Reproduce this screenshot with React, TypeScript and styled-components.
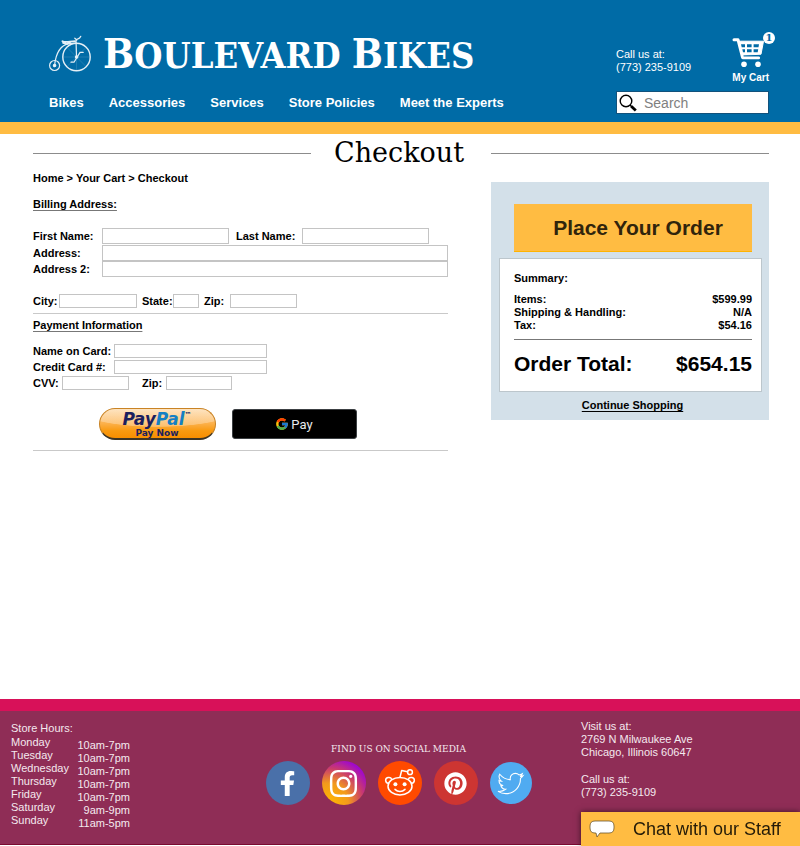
import React from "react";
import styled, { createGlobalStyle } from "styled-components";
import { FaFacebookF, FaInstagram, FaPinterest, FaTwitter } from "react-icons/fa";
import { FcGoogle } from "react-icons/fc";

const slab = `"DejaVu Serif Condensed", "DejaVu Serif", serif`;

const GlobalStyle = createGlobalStyle`
  *, *::before, *::after { box-sizing: border-box; }
  body {
    margin: 0;
    background: #fff;
    color: #000;
    font-family: "Liberation Sans", Arial, Helvetica, sans-serif;
    font-size: 11px;
    line-height: 13px;
  }
  h1, h2, h3, p, dl, dd, fieldset { margin: 0; padding: 0; border: 0; }
  a { color: inherit; text-decoration: none; }
  button, input { font: inherit; }
  svg { display: block; flex: none; }
`;

const Page = styled.div`
  display: flex;
  flex-direction: column;
  min-height: 100vh;
`;

/* Header */
const Header = styled.header`
  display: flex;
  justify-content: space-between;
  padding: 32px 31px 8px 49px;
  background: #006ba6;
  border-bottom: 12px solid #ffbc42;
  color: #fff;
`;
const Identity = styled.div`
  display: flex;
  flex-direction: column;
`;
const Brand = styled.a`
  display: flex;
  align-items: center;
  gap: 12px;
  height: 44px;
`;
const BrandName = styled.h1`
  font: bold 36px/44px ${slab};
  text-transform: uppercase;
  white-space: nowrap;
`;
const Initial = styled.span`
  font-size: 41px;
`;
const Nav = styled.nav`
  display: flex;
  gap: 25px;
  margin-top: 18px;
  font-size: 13px;
  line-height: 17px;
  font-weight: bold;
  white-space: nowrap;
`;
const HeaderTools = styled.div`
  display: flex;
  flex-direction: column;
  width: 153px;
`;
const ContactRow = styled.div`
  display: flex;
  justify-content: space-between;
  height: 52px;
`;
const Phone = styled.p`
  padding-top: 16px;
`;
const CartLink = styled.a`
  position: relative;
  display: flex;
  flex-direction: column;
  align-items: flex-start;
  gap: 3px;
  padding-top: 5px;
  font-size: 10px;
  font-weight: bold;
`;
const Badge = styled.span`
  position: absolute;
  top: 0;
  right: -6px;
  width: 12px;
  height: 12px;
  border-radius: 50%;
  background: #fff;
  color: #006ba6;
  font: bold 10px/12px "DejaVu Serif", serif;
  text-align: center;
`;
const SearchBox = styled.label`
  display: flex;
  align-items: center;
  gap: 7px;
  height: 23px;
  margin-top: 7px;
  padding-left: 3px;
  background: #fff;
  outline: 1px solid #11527c;
  outline-offset: -1px;
`;
const SearchInput = styled.input`
  flex: 1;
  min-width: 0;
  padding: 0;
  border: 0;
  outline: 0;
  background: none;
  font-size: 14px;
  line-height: 16px;
  &::placeholder { color: #808080; opacity: 1; }
`;

/* Body */
const Main = styled.main`
  flex: 1;
  padding: 0 31px 0 33px;
`;
const TitleRow = styled.div`
  display: grid;
  grid-template-columns: 1fr 180px 1fr;
  align-items: center;
  height: 38px;
`;
const TitleRule = styled.span`
  height: 1px;
  background: #8c8c8c;
`;
const Title = styled.h2`
  padding-right: 4px;
  font: 27px/38px "DejaVu Serif", serif;
  text-align: center;
`;
const Columns = styled.div`
  display: grid;
  grid-template-columns: minmax(0, 1fr) 278px;
  gap: 43px;
  align-items: start;
`;
const Form = styled.form`
  font-weight: bold;
`;
const Breadcrumb = styled.nav``;
const SectionTitle = styled.h3<{ $after: number }>`
  width: fit-content;
  margin-bottom: ${(p) => p.$after}px;
  font-size: 11px;
  text-decoration: underline;
  text-decoration-color: #777;
  text-underline-offset: 2px;
`;
const Billing = styled.section`
  padding: 13px 0 5px;
  border-bottom: 1px solid #c9c9c9;
`;
const Payment = styled.section`
  padding: 5px 0 10px;
  border-bottom: 1px solid #c9c9c9;
`;
const Row = styled.div<{ $gap: number; $top?: number }>`
  display: flex;
  align-items: center;
  gap: ${(p) => p.$gap}px;
  margin-top: ${(p) => p.$top ?? 0}px;
`;
const Field = styled.div`
  display: flex;
  align-items: center;
  flex: 0 1 auto;
`;
const WideField = styled(Field)`
  width: 100%;
`;
const Label = styled.label<{ $w: number }>`
  flex: none;
  width: ${(p) => p.$w}px;
  white-space: nowrap;
`;
const Input = styled.input<{ $w?: number; $tall?: boolean }>`
  width: ${(p) => (p.$w ? `${p.$w}px` : "auto")};
  flex: ${(p) => (p.$w ? "0 1 auto" : "1")};
  min-width: 0;
  height: ${(p) => (p.$tall ? 16 : 14)}px;
  padding: 0 3px;
  border: 1px solid #c4c4c4;
  border-radius: 0;
  background: #fff;
`;
const PayButtons = styled.div`
  display: flex;
  align-items: center;
  justify-content: center;
  gap: 16px;
  margin-top: 18px;
  padding-right: 26px;
`;
const PayPalButton = styled.button`
  width: 117px;
  height: 32px;
  padding: 2px 0 0;
  border: 1px solid #c98324;
  border-bottom: 2px solid #3d3424;
  border-radius: 16px;
  background:
    radial-gradient(ellipse 70% 62% at 50% 0%, rgba(255, 255, 255, 0.28) 97%, transparent 100%),
    linear-gradient(#fdd9a8, #fcb04a 50%, #f99a10 75%, #f88e00);
  color: #1b1f5e;
  font-family: "DejaVu Sans", Verdana, sans-serif;
  font-weight: bold;
`;
const PayPalMark = styled.span`
  display: flex;
  justify-content: center;
  font-size: 17px;
  line-height: 17px;
  font-style: italic;
`;
const Pal = styled.span`
  color: #1480c4;
`;
const Trade = styled.sup`
  font-size: 7px;
  line-height: 8px;
  font-style: normal;
`;
const PayNow = styled.span`
  display: block;
  font-size: 9px;
  line-height: 10px;
`;
const GooglePayButton = styled.button`
  display: flex;
  align-items: center;
  justify-content: center;
  gap: 2px;
  width: 125px;
  height: 30px;
  padding: 0;
  border: 1px solid #3c4043;
  border-radius: 3px;
  background: #000;
  color: #e8eaed;
  font-family: Roboto, sans-serif;
  font-size: 13px;
  font-weight: normal;
`;

/* Order summary */
const OrderPanel = styled.aside`
  display: flex;
  flex-direction: column;
  margin-top: 10px;
  padding: 22px 7px 8px 8px;
  background: #d3e0e9;
`;
const PlaceOrder = styled.button`
  height: 48px;
  margin: 0 10px 6px 15px;
  padding: 0 0 0 10px;
  border: 0;
  border-bottom: 1px solid #ffb300;
  background: #ffbc42;
  color: #30240c;
  font-size: 21px;
  font-weight: bold;
`;
const Summary = styled.section`
  padding: 13px 9px 15px 14px;
  border: 1px solid #bcc6cc;
  background: #fff;
  font-weight: bold;
`;
const SummaryTitle = styled.h3`
  margin-bottom: 8px;
  font-size: 11px;
`;
const Lines = styled.dl`
  padding-bottom: 7px;
  border-bottom: 1px solid #777;
`;
const Line = styled.div`
  display: flex;
  justify-content: space-between;
`;
const Total = styled.p`
  display: flex;
  justify-content: space-between;
  margin-top: 12px;
  font-size: 21px;
  line-height: 24px;
`;
const Continue = styled.a`
  align-self: center;
  margin: 7px 0 0 4px;
  font-weight: bold;
  text-decoration: underline;
  text-underline-offset: 2px;
`;

/* Footer */
const Footer = styled.footer`
  display: grid;
  grid-template-columns: 219px 1fr 219px;
  padding-top: 9px;
  min-height: 146px;
  margin-bottom: 1px;
  background: #8f2d56;
  border-top: 12px solid #d81159;
  border-bottom: 1px solid #7a0a30;
  color: #f4e9ee;
`;
const Hours = styled.table`
  width: 119px;
  margin: 2px 0 12px 11px;
  border-collapse: collapse;
  align-self: start;
`;
const Caption = styled.caption`
  padding-bottom: 4px;
  text-align: left;
`;
const Day = styled.th`
  padding: 0;
  font-weight: normal;
  text-align: left;
  vertical-align: top;
  line-height: 7px;
`;
const Time = styled.td`
  padding: 0;
  text-align: right;
`;
const Social = styled.section`
  display: flex;
  flex-direction: column;
  align-items: center;
  padding: 22px 3px 0 0;
`;
const SocialTitle = styled.h3`
  font: 10px/14px ${slab};
  white-space: nowrap;
`;
const SocialList = styled.div`
  display: flex;
  align-items: center;
  gap: 12px;
  margin-top: 5px;
`;
const SocialLink = styled.a<{ $bg: string; $size?: number }>`
  display: flex;
  align-items: center;
  justify-content: center;
  width: ${(p) => p.$size ?? 44}px;
  height: ${(p) => p.$size ?? 44}px;
  border-radius: 50%;
  background: ${(p) => p.$bg};
  color: #fff;
`;
const OutlineBird = styled(FaTwitter)`
  overflow: visible;
  path {
    fill: none;
    stroke: #fff;
    stroke-width: 22px;
  }
`;
const Visit = styled.address`
  font-style: normal;
`;
const VisitPart = styled.p`
  margin-bottom: 14px;
`;
const Chat = styled.button`
  position: fixed;
  right: 0;
  bottom: 0;
  display: flex;
  align-items: center;
  gap: 18px;
  width: 219px;
  height: 34px;
  padding: 0 0 0 8px;
  border: 0;
  background: #ffbc42;
  box-shadow: 0 0 6px rgba(0, 0, 0, 0.6);
  color: #241b08;
  font-size: 18px;
  white-space: nowrap;
`;

const PennyFarthing = () => (
  <svg width="42" height="38" viewBox="0 0 42 38" fill="none" stroke="#e4eff6" strokeWidth="1.2" strokeLinecap="round">
    <circle cx="27.5" cy="22" r="13.7" strokeWidth="1.4" />
    <circle cx="5.6" cy="30.5" r="5" />
    <circle cx="5.6" cy="30.5" r="1.2" fill="#fff" />
    <path d="M5.6 30C7 18 12 10 20 8.6L27 8" />
    <path d="M13.4 6.2c3 1.8 7 .2 12.6 0M14 7.8l3 .8M18 9l3-1.6" strokeWidth="1.8" />
    <path d="M27.5 21.5L27 5.5c0-2 3.5-.5 4.8-4.2M25.8 3.2l2 1.8" />
    <path d="M22 27.2h3l6-9.8h3.2" />
    <circle cx="27.6" cy="22" r="1.2" fill="#fff" />
    <path d="M27.5 9v26M14.5 22h26M18.5 13l18 18M36.5 13l-18 18" strokeWidth=".4" opacity=".35" />
  </svg>
);

const CartIcon = () => (
  <svg width="33" height="31" viewBox="0 0 33 31" fill="none">
    <path d="M2 2.7h4l4.6 18h16" stroke="#fff" strokeWidth="3" strokeLinecap="round" strokeLinejoin="round" />
    <path d="M6.5 4.2h25L29 17.2l-18.4 1z" fill="#fff" stroke="#fff" strokeLinejoin="round" />
    <path d="M9 7.3h4v3H9.7zM15 7.3h4.6v3H15zM21.6 7.3h5.4l-.5 3h-4.9zM10.3 12.2H13v3h-2zM15 12.2h4.6v3H15zM21.6 12.2h4.6l-.5 3h-4.1z" fill="#006ba6" />
    <circle cx="12" cy="27.3" r="2.8" fill="#fff" />
    <circle cx="26" cy="27.3" r="2.8" fill="#fff" />
    <path d="M11.5 18.9h16.5" stroke="#006ba6" strokeWidth=".8" />
  </svg>
);

const SearchIcon = () => (
  <svg width="18" height="18" viewBox="0 0 18 18" fill="none" stroke="#000">
    <circle cx="7" cy="7" r="5.8" strokeWidth="1.4" />
    <path d="M11 11l1.8 1.8" strokeWidth="1.6" />
    <path d="M12.2 12.2l4.6 4.4" strokeWidth="2.8" />
  </svg>
);

const RedditIcon = () => (
  <svg width="32" height="30" viewBox="0 0 32 30" fill="none" stroke="#fff" strokeWidth="1.5" strokeLinecap="round" strokeLinejoin="round">
    <ellipse cx="16" cy="18.2" rx="12" ry="8.8" />
    <path d="M4.6 15.4C1 15 .6 10.4 4 9.6c1.8-.4 3.2.4 3.8 1.8M27.4 15.4c3.6-.4 4-5 .6-5.8-1.8-.4-3.2.4-3.8 1.8" />
    <path d="M16 9.2l1.7-6.8 5.8 1.4" />
    <circle cx="26" cy="4.2" r="2.4" />
    <circle cx="11.4" cy="16.2" r="2" fill="#fff" stroke="none" />
    <circle cx="20.6" cy="16.2" r="2" fill="#fff" stroke="none" />
    <path d="M11 21.4c2.8 2.8 7.2 2.8 10 0" />
  </svg>
);

const SpeechIcon = () => (
  <svg width="26" height="18" viewBox="0 0 26 18">
    <path d="M6 1h14q5 0 5 5v2q0 5-5 5h-9l-3 4-1-4H6q-5 0-5-5V6q0-5 5-5z" fill="#fff" stroke="#6b5730" strokeWidth=".8" />
  </svg>
);

type FormFieldProps = { id: string; label: string; labelWidth: number; width?: number; tall?: boolean };
const FormField = ({ id, label, labelWidth, width, tall }: FormFieldProps) => {
  const Wrap = width ? Field : WideField;
  return (
    <Wrap>
      <Label htmlFor={id} $w={labelWidth}>{label}</Label>
      <Input id={id} type="text" $w={width} $tall={tall} />
    </Wrap>
  );
};

const navItems = ["Bikes", "Accessories", "Services", "Store Policies", "Meet the Experts"];
const hours = [
  ["Monday", "10am-7pm"],
  ["Tuesday", "10am-7pm"],
  ["Wednesday", "10am-7pm"],
  ["Thursday", "10am-7pm"],
  ["Friday", "10am-7pm"],
  ["Saturday", "9am-9pm"],
  ["Sunday", "11am-5pm"],
];
const costs = [
  ["Items:", "$599.99"],
  ["Shipping & Handling:", "N/A"],
  ["Tax:", "$54.16"],
];

export default function App() {
  return (
    <Page>
      <GlobalStyle />
      <Header>
        <Identity>
          <Brand href="#home">
            <PennyFarthing />
            <BrandName><Initial>B</Initial>oulevard <Initial>B</Initial>ikes</BrandName>
          </Brand>
          <Nav aria-label="Main">
            {navItems.map((item) => <a key={item} href="#shop">{item}</a>)}
          </Nav>
        </Identity>
        <HeaderTools>
          <ContactRow>
            <Phone>Call us at:<br />(773) 235-9109</Phone>
            <CartLink href="#cart">
              <CartIcon />
              My Cart
              <Badge>1</Badge>
            </CartLink>
          </ContactRow>
          <SearchBox>
            <SearchIcon />
            <SearchInput type="search" placeholder="Search" aria-label="Search" />
          </SearchBox>
        </HeaderTools>
      </Header>

      <Main>
        <TitleRow>
          <TitleRule />
          <Title>Checkout</Title>
          <TitleRule />
        </TitleRow>
        <Columns>
          <Form onSubmit={(e) => e.preventDefault()}>
            <Breadcrumb aria-label="Breadcrumb">
              <a href="#home">Home</a> &gt; <a href="#cart">Your Cart</a> &gt; <a href="#checkout">Checkout</a>
            </Breadcrumb>
            <Billing>
              <SectionTitle $after={17}>Billing Address:</SectionTitle>
              <Row $gap={7}>
                <FormField id="first" label="First Name:" labelWidth={69} width={127} tall />
                <FormField id="last" label="Last Name:" labelWidth={66} width={127} tall />
              </Row>
              <Row $gap={0} $top={1}>
                <FormField id="address" label="Address:" labelWidth={69} tall />
              </Row>
              <Row $gap={0}>
                <FormField id="address2" label="Address 2:" labelWidth={69} tall />
              </Row>
              <Row $gap={5} $top={17}>
                <FormField id="city" label="City:" labelWidth={26} width={78} />
                <FormField id="state" label="State:" labelWidth={31} width={26} />
                <FormField id="zip" label="Zip:" labelWidth={26} width={67} />
              </Row>
            </Billing>
            <Payment>
              <SectionTitle $after={12}>Payment Information</SectionTitle>
              <Row $gap={0}>
                <FormField id="card-name" label="Name on Card:" labelWidth={81} width={153} />
              </Row>
              <Row $gap={0} $top={2}>
                <FormField id="card-number" label="Credit Card #:" labelWidth={81} width={153} />
              </Row>
              <Row $gap={13} $top={2}>
                <FormField id="cvv" label="CVV:" labelWidth={29} width={67} />
                <FormField id="card-zip" label="Zip:" labelWidth={24} width={66} />
              </Row>
              <PayButtons>
                <PayPalButton type="button">
                  <PayPalMark>Pay<Pal>Pal</Pal><Trade>™</Trade></PayPalMark>
                  <PayNow>Pay Now</PayNow>
                </PayPalButton>
                <GooglePayButton type="button">
                  <FcGoogle size={14} />
                  Pay
                </GooglePayButton>
              </PayButtons>
            </Payment>
          </Form>

          <OrderPanel>
            <PlaceOrder type="button">Place Your Order</PlaceOrder>
            <Summary>
              <SummaryTitle>Summary:</SummaryTitle>
              <Lines>
                {costs.map(([name, value]) => (
                  <Line key={name}><dt>{name}</dt><dd>{value}</dd></Line>
                ))}
              </Lines>
              <Total><span>Order Total:</span><span>$654.15</span></Total>
            </Summary>
            <Continue href="#shop">Continue Shopping</Continue>
          </OrderPanel>
        </Columns>
      </Main>

      <Footer>
        <Hours>
          <Caption>Store Hours:</Caption>
          <tbody>
            {hours.map(([day, time]) => (
              <tr key={day}><Day scope="row">{day}</Day><Time>{time}</Time></tr>
            ))}
          </tbody>
        </Hours>
        <Social>
          <SocialTitle>FIND US ON SOCIAL MEDIA</SocialTitle>
          <SocialList>
            <SocialLink href="#facebook" aria-label="Facebook" $bg="#4a70a9"><FaFacebookF size={25} /></SocialLink>
            <SocialLink href="#instagram" aria-label="Instagram" $bg="radial-gradient(circle at 15% 95%, #ffb800, #f39a1c 35%, #c93a6e 62%, #9a00dc 85%)"><FaInstagram size={31} /></SocialLink>
            <SocialLink href="#reddit" aria-label="Reddit" $bg="#ff4a00"><RedditIcon /></SocialLink>
            <SocialLink href="#pinterest" aria-label="Pinterest" $bg="#cd3532"><FaPinterest size={23} /></SocialLink>
            <SocialLink href="#twitter" aria-label="Twitter" $bg="#50abf1" $size={42}><OutlineBird size={25} /></SocialLink>
          </SocialList>
        </Social>
        <Visit>
          <VisitPart>Visit us at:<br />2769 N Milwaukee Ave<br />Chicago, Illinois 60647</VisitPart>
          <VisitPart>Call us at:<br />(773) 235-9109</VisitPart>
        </Visit>
      </Footer>
      <Chat type="button">
        <SpeechIcon />
        Chat with our Staff
      </Chat>
    </Page>
  );
}
